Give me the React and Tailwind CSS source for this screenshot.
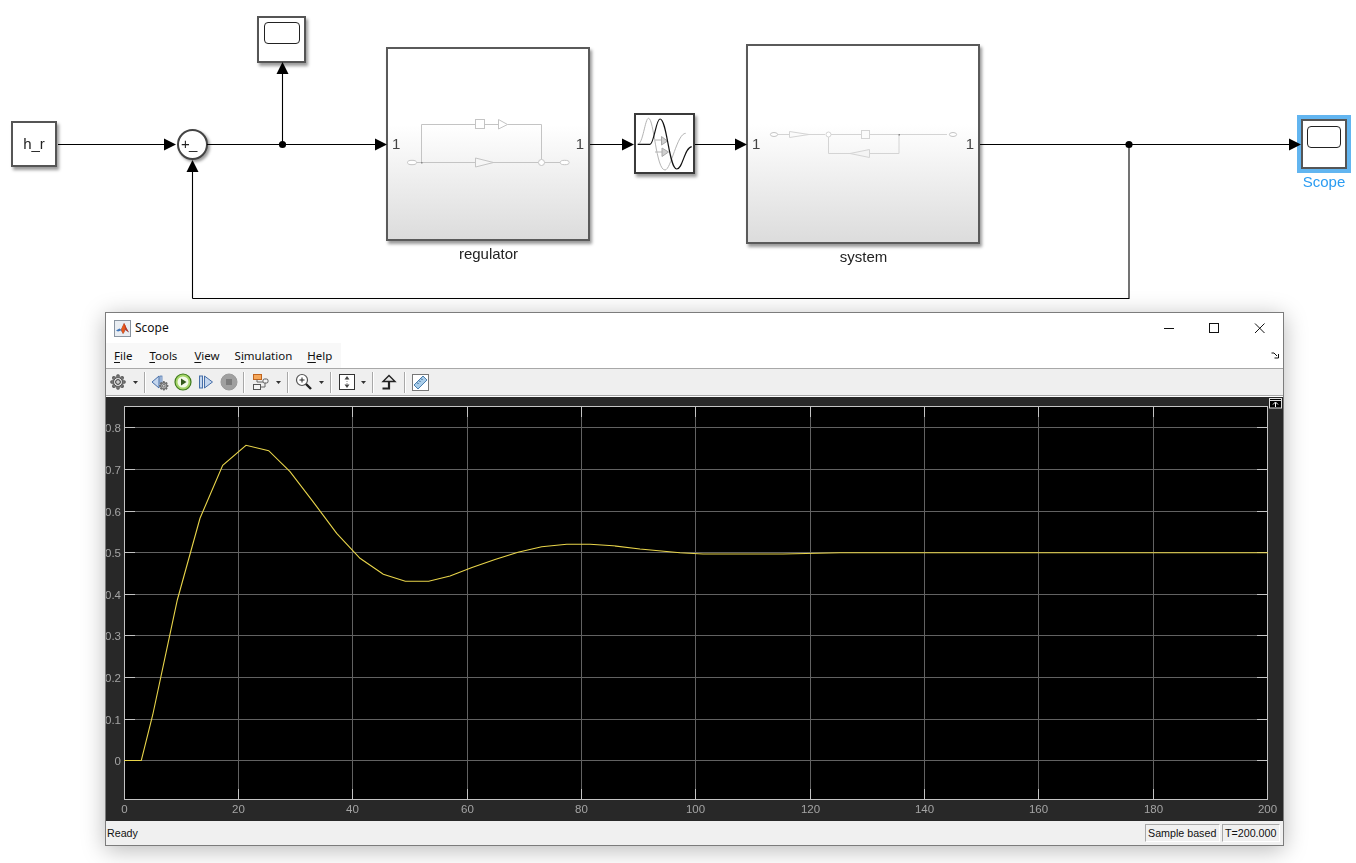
const curve = "124.3,760.5 141.3,760.5 152.7,715 177.3,600 200,518.3 222.7,465.3 246,445.3 268.7,450.7 290,471.7 313,501.7 336.7,533.3 360,558.3 383.3,574.3 405.3,581.3 428.7,581.3 450,576 472,567.5 495,559.5 518,552.3 541.7,546.7 566.7,544.3 590,544.3 613,545.7 640,549 680,552.7 703,554 783,554 840,552.7 1268,552.7";

const ySteps = [
  ["0", 760.5], ["0.1", 719.5], ["0.2", 677.5], ["0.3", 635.5], ["0.4", 594.5],
  ["0.5", 552.5], ["0.6", 511.5], ["0.7", 469.5], ["0.8", 427.5],
];
const xSteps = [0, 20, 40, 60, 80, 100, 120, 140, 160, 180, 200].map((v, i) => [v, Math.floor(124 + i * 114.36) + 0.5]);

function Arrow({ dir, x, y }) {
  const p = {
    r: `${x - 12},${y - 6} ${x},${y} ${x - 12},${y + 6}`,
    u: `${x - 6},${y + 12} ${x},${y} ${x + 6},${y + 12}`,
  }[dir];
  return <polygon points={p} fill="#000" />;
}

function Oval({ cx, cy, rx = 4.5, ry = 2.2 }) {
  return <ellipse cx={cx} cy={cy} rx={rx} ry={ry} fill="#fff" stroke="#c4c4c4" strokeWidth="1" />;
}

function Wires() {
  return (
    <svg className="absolute left-0 top-0 z-20" width="1356" height="312" viewBox="0 0 1356 312" fill="none">
      <g stroke="#000" strokeWidth="1.1">
        <path d="M58 144.5H166M207 144.5H376M282.5 144.5V72M590 144.5H624M695 144.5H736M980 144.5H1290M192.5 298.5H1129V144.5M192.5 298.5V170" />
      </g>
      <Arrow dir="r" x={176} y={144.5} />
      <Arrow dir="r" x={387} y={144.5} />
      <Arrow dir="u" x={282.5} y={62} />
      <Arrow dir="u" x={192.5} y={160} />
      <Arrow dir="r" x={634} y={144.5} />
      <Arrow dir="r" x={747} y={144.5} />
      <Arrow dir="r" x={1301} y={144.5} />
      <circle cx="282.5" cy="144.5" r="3.6" fill="#000" />
      <circle cx="1129" cy="144.5" r="3.6" fill="#000" />

      <g stroke="#c4c4c4" strokeWidth="1">
        <path d="M416.5 162.5H475M493 162.5H538M544.5 162.5H560M421.5 162.5V124.5H475M484.5 124.5H498M507.5 124.5H541.5V159.5" />
        <rect x="475.5" y="119.5" width="9" height="9" fill="#fff" />
        <polygon points="498.5,119.5 507.5,124.5 498.5,129" fill="#fff" />
        <polygon points="475.5,158 493.5,162.5 475.5,167" fill="#f6f6f6" />
        <circle cx="541.5" cy="162.5" r="3" fill="#fff" />
      </g>
      <rect x="421" y="162" width="1.5" height="1.5" fill="#888" />
      <Oval cx={412} cy={162.5} />
      <Oval cx={564.7} cy={162.5} />

      <g stroke="#d4d4d4" strokeWidth="1">
        <path d="M777.5 134.5H789.5M809 134.5H825M831 134.5H861.5M869.5 134.5H947M899 134.5V153.5H870M850 153.5H828.5V137" />
        <polygon points="789.5,131.5 809,134.5 789.5,137.5" fill="#fbfbfb" />
        <rect x="861.5" y="130.5" width="8" height="8" fill="#fbfbfb" />
        <polygon points="869.5,149.5 850,153.5 869.5,157.5" fill="#f4f4f4" />
        <circle cx="828.5" cy="134.5" r="2.5" fill="#fff" />
      </g>
      <Oval cx={774} cy={134.5} rx={3.6} ry={2} />
      <Oval cx={953} cy={134.5} rx={3.6} ry={2} />
      <rect x="898.5" y="134" width="1.5" height="1.5" fill="#888" />

      <g strokeWidth="1">
        <path d="M637.7 144.3C643 144.3 645 118.3 648.5 118.3C654 118.3 656 170 665 170C671 170 677 133.3 685.7 133.3" stroke="#b4b4b4" />
        <path d="M655 140H662M655 152H663" stroke="#b4b4b4" />
        <polygon points="661.5,136.5 667.5,141 661.5,145" fill="#cfcfcf" stroke="#a8a8a8" />
        <polygon points="662,148 668.5,152 662,156.5" fill="#cfcfcf" stroke="#a8a8a8" />
        <path d="M637.7 144.3H650C654 144.3 656 119 660 119C667 119 669 169 676.7 169C683 169 684 148 691.7 146.7" stroke="#111" strokeWidth="1.2" />
      </g>
    </svg>
  );
}

function ScopeBlock({ className, inner, selected }) {
  return (
    <div className={`absolute border-2 border-[#555] bg-white ${selected ? "shadow-[0_0_0_4px_#62b5f0]" : "shadow-[2px_3px_3px_rgba(0,0,0,0.4)]"} ${className}`}>
      <div className={`mx-auto rounded-[4px] border border-[#222] bg-white ${inner}`} />
    </div>
  );
}

function Subsystem({ className, label, labelClass }) {
  return (
    <>
      <div className={`absolute flex items-center justify-between border-2 border-[#5a5a5a] bg-[linear-gradient(#fff_0%,#fff_40%,#dcdcdc_100%)] px-[4px] text-[15px] text-[#444] shadow-[2px_3px_3px_rgba(0,0,0,0.4)] ${className}`}>
        <span className="relative z-30">1</span>
        <span className="relative z-30">1</span>
      </div>
      <div className={`absolute text-center text-[15px] leading-[16px] text-[#222] ${labelClass}`}>{label}</div>
    </>
  );
}

function Diagram() {
  return (
    <div className="relative h-[312px] w-full shrink-0 font-['Liberation_Sans',Arial,sans-serif] will-change-transform">
      <div className="absolute left-[11px] top-[121px] flex h-[46px] w-[46px] items-center justify-center border-2 border-[#555] bg-white text-[15px] text-[#222] shadow-[2px_3px_3px_rgba(0,0,0,0.4)]">h_r</div>
      <div className="absolute left-[177px] top-[129px] h-[31px] w-[31px] rounded-full border-2 border-[#444] bg-white text-[15px] leading-[15px] text-[#222] shadow-[2px_2px_3px_rgba(0,0,0,0.4)]">
        <span className="absolute left-[2px] top-[5px]">+</span>
        <span className="absolute left-[10px] top-[5px]">_</span>
      </div>
      <ScopeBlock className="left-[257px] top-[16px] h-[47px] w-[49px]" inner="mt-[4px] h-[22px] w-[36px]" />
      <Subsystem className="left-[386px] top-[47px] h-[194px] w-[204px]" label="regulator" labelClass="left-[387px] top-[246px] w-[203px]" />
      <div className="absolute left-[634px] top-[113px] h-[61px] w-[61px] border-2 border-[#3a3a3a] bg-white shadow-[2px_3px_3px_rgba(0,0,0,0.4)]" />
      <Subsystem className="left-[746px] top-[44px] h-[200px] w-[234px]" label="system" labelClass="left-[747px] top-[249px] w-[233px]" />
      <ScopeBlock className="left-[1301px] top-[119px] h-[50px] w-[46px]" inner="mt-[5px] h-[22px] w-[34px]" selected />
      <div className="absolute left-[1294px] top-[174px] w-[60px] text-center text-[15px] leading-[16px] text-[#2b9cf2]">Scope</div>
      <Wires />
    </div>
  );
}

function MatlabLogo() {
  return (
    <svg width="17" height="17" viewBox="0 0 17 17">
      <rect x="0.5" y="0.5" width="16" height="16" fill="#e9edf2" stroke="#8a94a0" />
      <path d="M2 10.5L5.5 8.5L7 9.5L10 3L13 9L15 12.5L11.5 10L9 14L7 10.5L4 11.5Z" fill="#3f74b8" />
      <path d="M7 9.5L10 3L11.5 5.5L10.5 12L9 14L7.5 11Z" fill="#e85a1c" />
      <path d="M10 3L13 9L15 12.5L11.5 10L10.5 6Z" fill="#c9371a" />
    </svg>
  );
}

function Menu({ k, rest, pre = "", className }) {
  return (
    <span className={className}>
      {pre}<span className="underline underline-offset-2">{k}</span>{rest}
    </span>
  );
}

function Caret({ ml }) {
  return (
    <svg className="shrink-0" style={{ marginLeft: ml }} width="5" height="3" viewBox="0 0 5 3">
      <polygon points="0,0 5,0 2.5,3" fill="#333" />
    </svg>
  );
}

function Sep({ ml }) {
  return <div className="h-[21px] w-[2px] shrink-0 border-r border-white bg-[#a8a8a8]" style={{ marginLeft: ml }} />;
}

function GearShape() {
  const teeth = [0, 45, 90, 135, 180, 225, 270, 315];
  return (
    <>
      {teeth.map((a) => (
        <rect key={a} x="6.5" y="0.5" width="3" height="15" rx="1" fill="#666" transform={`rotate(${a} 8 8)`} />
      ))}
      <circle cx="8" cy="8" r="6" fill="#777" />
      <circle cx="8" cy="8" r="4.4" fill="#ececec" stroke="#444" strokeWidth="0.8" />
      <circle cx="8" cy="8" r="2.4" fill="#cfcfcf" stroke="#333" strokeWidth="1" />
    </>
  );
}

function Toolbar() {
  return (
    <div className="flex h-[26px] shrink-0 items-center bg-[#efefef] pl-[4px]">
      <svg className="shrink-0" width="16" height="16" viewBox="0 0 16 16"><GearShape /></svg>
      <Caret ml={7} />
      <Sep ml={6} />
      <svg className="ml-[5px] shrink-0" width="18" height="18" viewBox="0 0 18 18">
        <polygon points="8,3 1,9 8,15" fill="#c4d6ee" stroke="#466ea8" />
        <rect x="9" y="3" width="2" height="8" fill="#c4d6ee" stroke="#466ea8" strokeWidth="0.7" />
        <g transform="translate(8 8) scale(0.6)"><GearShape /></g>
      </svg>
      <svg className="ml-[5px] shrink-0" width="18" height="18" viewBox="0 0 18 18">
        <circle cx="9" cy="9" r="8" fill="#a6d66a" stroke="#3f7a1c" strokeWidth="1.2" />
        <circle cx="9" cy="9" r="5.5" fill="#f3f9e8" />
        <polygon points="7,5.5 12.5,9 7,12.5" fill="#33591c" />
      </svg>
      <svg className="ml-[6px] shrink-0" width="16" height="16" viewBox="0 0 16 16">
        <rect x="1.5" y="2" width="3" height="12" fill="#c4d6ee" stroke="#466ea8" />
        <polygon points="6.5,2 14.5,8 6.5,14" fill="#c4d6ee" stroke="#466ea8" />
      </svg>
      <svg className="ml-[6px] shrink-0" width="18" height="18" viewBox="0 0 18 18">
        <circle cx="9" cy="9" r="8" fill="#a0a0a0" stroke="#9a9a9a" />
        <rect x="6" y="6" width="6" height="6" fill="#7c7c7c" />
      </svg>
      <Sep ml={5} />
      <svg className="ml-[7px] shrink-0" width="18" height="18" viewBox="0 0 18 18">
        <rect x="1.5" y="1.5" width="8" height="5" fill="#f5a75a" stroke="#c0641e" />
        <rect x="1.5" y="11.5" width="7" height="5" fill="#f4f4f4" stroke="#555" />
        <rect x="11" y="6" width="5" height="4" rx="1.5" fill="#f4f4f4" stroke="#555" />
        <path d="M5 6.5V9H11M13 10V14H8.5" fill="none" stroke="#666" />
      </svg>
      <Caret ml={6} />
      <Sep ml={6} />
      <svg className="ml-[6px] shrink-0" width="18" height="18" viewBox="0 0 18 18">
        <circle cx="7" cy="7" r="5.5" fill="#fff" stroke="#555" strokeWidth="1.2" />
        <path d="M4.5 7H9.5M7 4.5V9.5" stroke="#222" />
        <path d="M11 11L16 16" stroke="#222" strokeWidth="2.4" />
      </svg>
      <Caret ml={6} />
      <Sep ml={6} />
      <svg className="ml-[7px] shrink-0" width="16" height="16" viewBox="0 0 16 16">
        <rect x="0.5" y="0.5" width="15" height="15" fill="#fff" stroke="#333" />
        <polygon points="8,2 10.5,5.5 5.5,5.5" fill="#444" />
        <polygon points="8,14 10.5,10.5 5.5,10.5" fill="#444" />
        <path d="M8 5V11" stroke="#888" strokeDasharray="1 1" />
      </svg>
      <Caret ml={6} />
      <Sep ml={6} />
      <svg className="ml-[7px] shrink-0" width="16" height="16" viewBox="0 0 16 16">
        <polygon points="8,1.5 2,7.5 14,7.5" fill="#e6e6e6" stroke="#222" strokeWidth="1.4" />
        <path d="M8 7.5V14.5H1.5" fill="none" stroke="#222" strokeWidth="2.2" />
      </svg>
      <Sep ml={7} />
      <svg className="ml-[6px] shrink-0" width="17" height="17" viewBox="0 0 17 17">
        <rect x="0.5" y="0.5" width="16" height="16" fill="#fff" stroke="#777" />
        <polygon points="2,11 11,2 15,6 6,15" fill="#a9cdea" stroke="#4b7fae" />
        <path d="M5 8.5L6.5 10M7 6.5L8.5 8M9 4.5L10.5 6" stroke="#2d5f8d" />
      </svg>
    </div>
  );
}

function Plot() {
  return (
    <div className="h-[424px] shrink-0 bg-[#282828]">
      <svg width="1177" height="424" viewBox="106 397 1177 424" className="block will-change-transform">
        <rect x="124.5" y="406.5" width="1143" height="393" fill="#000" stroke="#c4c4c4" />
        <g stroke="#626262" strokeWidth="1">
          {xSteps.slice(1, -1).map(([v, x]) => <path key={v} d={`M${x} 407V799`} />)}
          {ySteps.map(([t, y]) => <path key={t} d={`M125 ${y}H1267`} />)}
        </g>
        <g stroke="#c4c4c4" strokeWidth="1">
          {xSteps.slice(1, -1).map(([v, x]) => <path key={v} d={`M${x} 407V417M${x} 789V799`} />)}
          {ySteps.map(([t, y]) => <path key={t} d={`M125 ${y}H135M1257 ${y}H1267`} />)}
        </g>
        <polyline points={curve} fill="none" stroke="#e8d44a" strokeWidth="1.1" />
        <g fill="#a4a4a4" fontFamily="'Liberation Sans', Arial, sans-serif" fontSize="11.5">
          {ySteps.map(([t, y]) => <text key={t} x="121" y={y + 4} textAnchor="end">{t}</text>)}
          {xSteps.map(([v, x]) => <text key={v} x={x} y="813" textAnchor="middle">{v}</text>)}
        </g>
        <rect x="1269.5" y="398.5" width="12" height="9.5" fill="#000" stroke="#ddd" />
        <path d="M1270 400.5H1281" stroke="#ddd" />
        <path d="M1275.5 407V402.5M1273 404.5L1275.5 402L1278 404.5" fill="none" stroke="#fff" />
      </svg>
    </div>
  );
}

function ScopeWindow() {
  return (
    <div className="ml-[105px] flex h-[534px] w-[1179px] flex-col border border-[#7c7c7c] bg-white shadow-[0_4px_22px_rgba(0,0,0,0.28)]">
      <div className="flex h-[30px] shrink-0 items-center pl-[8px] font-['Noto_Sans',sans-serif] text-[12px] text-[#111]">
        <MatlabLogo />
        <span className="ml-[4px] flex-1">Scope</span>
        <svg className="mr-[18px]" width="101" height="11" viewBox="0 0 101 11" fill="none" stroke="#111">
          <path d="M0 5.5H10" />
          <rect x="45.5" y="0.5" width="9" height="9" />
          <path d="M91 0.5L100.5 10M100.5 0.5L91 10" />
        </svg>
      </div>
      <div className="flex h-[25px] shrink-0 items-center justify-between">
        <div className="flex h-full w-[235px] items-center bg-[#f8f8f8] font-['Noto_Sans',sans-serif] text-[11.5px] text-[#111]">
          <Menu k="F" rest="ile" className="pl-[8px] pr-[9px]" />
          <Menu k="T" rest="ools" className="pl-[8px] pr-[9px]" />
          <Menu k="V" rest="iew" className="pl-[8px] pr-[7px]" />
          <Menu pre="S" k="i" rest="mulation" className="pl-[8px] pr-[7px]" />
          <Menu k="H" rest="elp" className="px-[8px]" />
        </div>
        <svg className="mr-[4px]" width="8" height="7" viewBox="0 0 8 7" fill="none" stroke="#111">
          <path d="M0.5 1H3L6 4M7.5 2V6H3.5" />
        </svg>
      </div>
      <div className="h-[1px] shrink-0 bg-[#a8a8a8]" />
      <Toolbar />
      <div className="h-[2px] shrink-0 border-t border-[#a8a8a8] bg-white" />
      <Plot />
      <div className="flex flex-1 items-center justify-between bg-[#f0f0f0] font-['Liberation_Sans',Arial,sans-serif] text-[10.7px] text-[#111]">
        <span className="ml-[1px]">Ready</span>
        <div className="mr-[3px] flex gap-[2px]">
          <span className="flex h-[18px] w-[75px] items-center border border-l-[#a8a8a8] border-t-[#a8a8a8] border-r-white border-b-white pl-[2px]">Sample based</span>
          <span className="flex h-[18px] w-[58px] items-center border border-l-[#a8a8a8] border-t-[#a8a8a8] border-r-white border-b-white pl-[2px]">T=200.000</span>
        </div>
      </div>
    </div>
  );
}

export default function App() {
  return (
    <div className="flex h-[863px] w-[1356px] flex-col overflow-hidden bg-white">
      <Diagram />
      <ScopeWindow />
    </div>
  );
}
